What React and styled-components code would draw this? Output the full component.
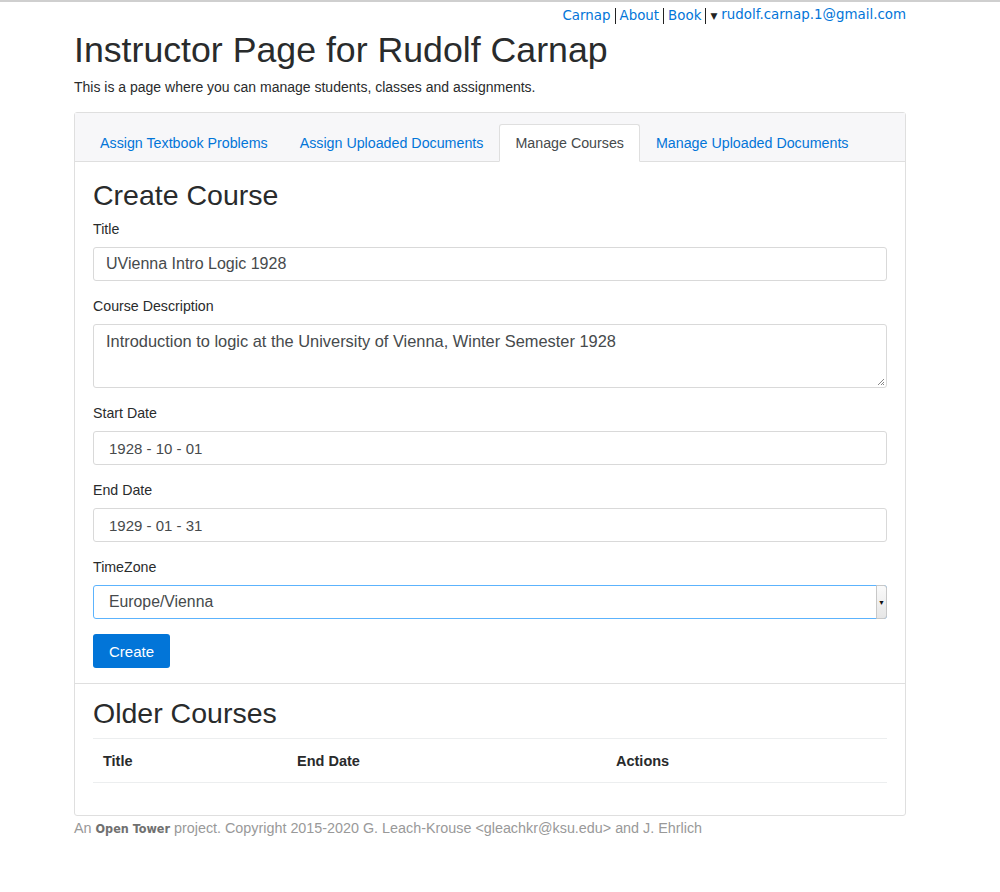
import styled, { createGlobalStyle } from 'styled-components'

const GlobalStyle = createGlobalStyle`
	html, body {
		margin: 0;
		padding: 0;
		background: #fff;
	}
	body {
		border-top: 2px solid #cfcfcf;
		font-family: "Liberation Sans", Arial, sans-serif;
		font-size: 14px;
		color: #292b2c;
	}
	* {
		box-sizing: border-box;
	}
`

const Container = styled.div`
	width: 832px;
	margin: 0 0 0 74px;
`

const TopNav = styled.nav`
	display: flex;
	justify-content: flex-end;
	align-items: center;
	height: 26px;
	padding-top: 1px;
	font-family: "DejaVu Sans", sans-serif;
	font-size: 13.4px;
`

const NavLink = styled.a`
	color: #0275d8;
	text-decoration: none;
	padding: 0 4px;
	line-height: 16px;
	border-right: ${(props) => (props.$last ? 'none' : '1px solid #222')};
	&:last-child {
		padding-right: 0;
	}
`

const Caret = styled.span`
	font-size: 9px;
	color: #222;
	margin-right: 4px;
`

const PageTitle = styled.h1`
	margin: 1px 0 0;
	font-size: 35.7px;
	font-weight: 400;
	line-height: 42px;
	color: #292b2c;
`

const Lead = styled.p`
	margin: 6px 0 15px;
	font-size: 14px;
	line-height: 20px;
`

const Card = styled.div`
	border: 1px solid #dfdfdf;
	border-radius: 3px;
	background: #fff;
`

const CardHeader = styled.div`
	display: flex;
	align-items: flex-end;
	height: 49px;
	padding: 11px 9px 0;
	background: #f7f7f9;
	border-bottom: 1px solid #dfdfdf;
`

const Tab = styled.a`
	display: flex;
	align-items: center;
	height: 38px;
	padding: 0 15px;
	margin-bottom: -1px;
	font-size: 14.25px;
	text-decoration: none;
	color: ${(props) => (props.$active ? '#464a4c' : '#0275d8')};
	background: ${(props) => (props.$active ? '#fff' : 'transparent')};
	border: 1px solid ${(props) => (props.$active ? '#dfdfdf' : 'transparent')};
	border-bottom-color: ${(props) => (props.$active ? '#fff' : 'transparent')};
	border-radius: 3px 3px 0 0;
`

const CardBody = styled.div`
	padding: ${(props) => props.$pad || '16px 18px 15px'};
	border-top: ${(props) => (props.$divided ? '1px solid #dfdfdf' : 'none')};
`

const SectionTitle = styled.h2`
	margin: 0 0 ${(props) => props.$gap || 7}px;
	font-size: 28.5px;
	font-weight: 400;
	line-height: 34px;
	color: #292b2c;
`

const FormGroup = styled.div`
	margin-bottom: 15px;
`

const Label = styled.label`
	display: block;
	font-size: 14.2px;
	line-height: 20px;
	margin-bottom: 8px;
`

const Field = styled.div`
	display: flex;
	align-items: ${(props) => (props.$area ? 'flex-start' : 'center')};
	position: relative;
	height: ${(props) => props.$height || 34}px;
	padding: ${(props) => (props.$area ? '7px' : '0')} ${(props) => props.$indent || 12}px;
	border: 1px solid ${(props) => (props.$focus ? '#5cb3fd' : '#d9d9d9')};
	border-radius: 3px;
	font-size: ${(props) => props.$size || 16}px;
	color: #464a4c;
	background: #fff;
`

const Grip = styled.svg`
	position: absolute;
	right: 1px;
	bottom: 1px;
`

const SelectArrow = styled.div`
	position: absolute;
	right: -1px;
	top: -1px;
	bottom: -1px;
	width: 11px;
	display: flex;
	align-items: center;
	justify-content: center;
	background: linear-gradient(#fafafa, #e6e6e6);
	border: 1px solid #c8c8c8;
	border-radius: 0 3px 3px 0;
	font-size: 7px;
	color: #111;
`

const Button = styled.button`
	height: 34px;
	padding: 0 16px;
	border: none;
	border-radius: 3px;
	background: #0275d8;
	color: #fff;
	font-family: "Liberation Sans", Arial, sans-serif;
	font-size: 15px;
`

const Table = styled.div`
	display: grid;
	grid-template-columns: 194px 319px 1fr;
	border-top: 1px solid #eceeef;
	border-bottom: 1px solid #eceeef;
`

const Th = styled.div`
	padding: 0 10px;
	height: 43px;
	display: flex;
	align-items: center;
	font-weight: 700;
	font-size: 14.5px;
`

const Footer = styled.footer`
	padding-top: 4px;
	color: #999;
	font-size: 14.35px;
	line-height: 16px;
`

const Brand = styled.span`
	font-family: "DejaVu Sans Condensed", "DejaVu Sans", sans-serif;
	font-stretch: condensed;
	font-weight: 700;
	font-size: 12.5px;
	color: #707070;
`

const dateText = (d) => d.split('-').join(' - ')

export default function App() {
	return (
		<>
			<GlobalStyle />
			<Container>
				<TopNav>
					<NavLink href="#">Carnap</NavLink>
					<NavLink href="#">About</NavLink>
					<NavLink href="#">Book</NavLink>
					<NavLink href="#" $last>
						<Caret>▼</Caret>rudolf.carnap.1@gmail.com
					</NavLink>
				</TopNav>
				<PageTitle>Instructor Page for Rudolf Carnap</PageTitle>
				<Lead>This is a page where you can manage students, classes and assignments.</Lead>
				<Card>
					<CardHeader>
						<Tab href="#">Assign Textbook Problems</Tab>
						<Tab href="#">Assign Uploaded Documents</Tab>
						<Tab href="#" $active>Manage Courses</Tab>
						<Tab href="#">Manage Uploaded Documents</Tab>
					</CardHeader>
					<CardBody>
						<SectionTitle>Create Course</SectionTitle>
						<FormGroup>
							<Label>Title</Label>
							<Field>UVienna Intro Logic 1928</Field>
						</FormGroup>
						<FormGroup>
							<Label>Course Description</Label>
							<Field $area $height={64} $size={16.4}>
								Introduction to logic at the University of Vienna, Winter Semester 1928
								<Grip width="9" height="9" viewBox="0 0 9 9">
									<path d="M8 2 L2 8 M8 5 L5 8 M8 7 L7 8" stroke="#888" strokeWidth="1" />
								</Grip>
							</Field>
						</FormGroup>
						<FormGroup>
							<Label>Start Date</Label>
							<Field $indent={15} $size={15}>{dateText('1928-10-01')}</Field>
						</FormGroup>
						<FormGroup>
							<Label>End Date</Label>
							<Field $indent={15} $size={15}>{dateText('1929-01-31')}</Field>
						</FormGroup>
						<FormGroup>
							<Label>TimeZone</Label>
							<Field $focus $indent={15} $size={15.8}>
								Europe/Vienna
								<SelectArrow>▼</SelectArrow>
							</Field>
						</FormGroup>
						<Button>Create</Button>
					</CardBody>
					<CardBody $divided $pad="12px 18px 32px">
						<SectionTitle $gap={8}>Older Courses</SectionTitle>
						<Table>
							<Th>Title</Th>
							<Th>End Date</Th>
							<Th>Actions</Th>
						</Table>
					</CardBody>
				</Card>
				<Footer>
					An <Brand>Open Tower</Brand> project. Copyright 2015-2020 G. Leach-Krouse &lt;gleachkr@ksu.edu&gt; and J. Ehrlich
				</Footer>
			</Container>
		</>
	)
}
